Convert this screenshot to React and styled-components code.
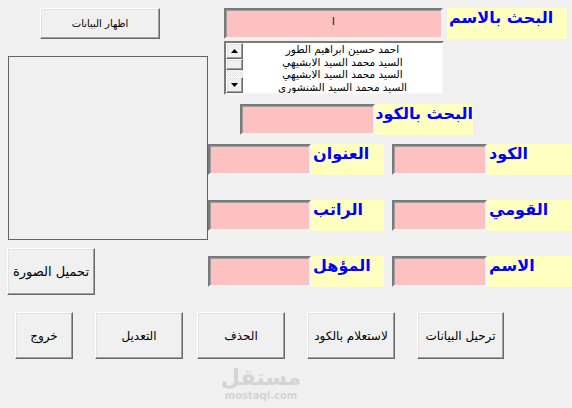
import React from "react";
import styled, { createGlobalStyle } from "styled-components";

// =============================
// Base
// =============================
const GlobalStyle = createGlobalStyle`
  html, body { margin: 0; padding: 0; background: #f0f0f0; }
  body { font-family: "DejaVu Sans", "Noto Sans", sans-serif; }
  * { box-sizing: border-box; }
`;

const Form = styled.div`
  position: relative;
  width: 572px;
  height: 408px;
  background: #f0f0f0;
  overflow: hidden;
`;

const Top = styled.div`
  display: flex;
  height: 304px;
`;

const LeftCol = styled.div`
  width: 208px;
  display: flex;
  flex-direction: column;
  align-items: flex-start;
`;

const RightCol = styled.div`
  flex: 1;
  display: flex;
  flex-direction: column;
  align-items: flex-start;
`;

// =============================
// Controls
// =============================
const Button = styled.button`
  width: ${({ $w }) => $w}px;
  height: ${({ $h }) => $h || 47}px;
  margin: ${({ $m }) => $m || 0};
  padding: 0;
  background: #f0f0f0;
  border: 1px solid;
  border-color: #ffffff #696969 #696969 #ffffff;
  box-shadow: inset -1px -1px 0 #a0a0a0, inset 1px 1px 0 #e3e3e3;
  font-family: "DejaVu Sans", sans-serif;
  font-size: ${({ $fs }) => $fs || 12}px;
  color: #000;
  direction: rtl;
  white-space: nowrap;
  display: flex;
  align-items: center;
  justify-content: center;
`;

const PictureFrame = styled.div`
  width: 200px;
  height: 184px;
  margin: 17px 0 0 8px;
  border: 1px solid #646464;
`;

const Row = styled.div`
  display: flex;
  align-items: flex-start;
  margin: ${({ $m }) => $m || 0};
`;

const TextBox = styled.div`
  width: ${({ $w }) => $w}px;
  height: 31px;
  background: #ffc0c0;
  border: 2px solid;
  border-color: #7a7a7a #f4f4f4 #f4f4f4 #7a7a7a;
  box-shadow: inset 1px 1px 0 #a0a0a0;
  font-family: "DejaVu Sans", sans-serif;
  font-size: 10px;
  text-align: center;
  padding-top: 6px;
  color: #000;
`;

const Label = styled.div`
  width: ${({ $w }) => $w}px;
  height: 31px;
  margin-left: ${({ $gap }) => $gap || 0}px;
  background: #ffffc0;
  color: #0000ff;
  font-family: "DejaVu Sans", sans-serif;
  font-weight: bold;
  font-size: 16px;
  line-height: 20px;
  padding: 0 0 0 2px;
  direction: rtl;
  text-align: left;
  white-space: nowrap;
`;

const ListBox = styled.div`
  width: 220px;
  height: 54px;
  margin: 2px 0 0 16px;
  background: #fff;
  border: 2px solid;
  border-color: #7a7a7a #f4f4f4 #f4f4f4 #7a7a7a;
  display: flex;
`;

const ScrollBar = styled.div`
  width: 17px;
  display: flex;
  flex-direction: column;
`;

const ScrollBtn = styled.div`
  height: ${({ $h }) => $h}px;
  background: #f0f0f0;
  border: 1px solid;
  border-color: #ffffff #696969 #696969 #ffffff;
  box-shadow: inset -1px -1px 0 #a0a0a0, inset 1px 1px 0 #e3e3e3;
  display: flex;
  align-items: center;
  justify-content: center;
`;

const Track = styled.div`
  flex: 1;
  background-color: #f0f0f0;
  background-image: repeating-conic-gradient(#ffffff 0 25%, #e0e0e0 0 50%);
  background-size: 2px 2px;
`;

const Items = styled.div`
  flex: 1;
  direction: rtl;
  text-align: center;
  font-family: "DejaVu Sans", sans-serif;
  font-size: 10.5px;
  line-height: 12.5px;
  color: #000;
  overflow: hidden;
`;

const FieldGrid = styled.div`
  display: grid;
  grid-template-columns: 176px 180px;
  column-gap: 8px;
  row-gap: 25px;
  margin-top: 9px;
`;

const Pair = styled.div`
  display: flex;
`;

const BottomRow = styled.div`
  display: flex;
  margin-top: 8px;
  padding-left: 15px;
`;

// watermark sits over the form background
const Watermark = styled.div`
  position: absolute;
  left: 220px;
  top: 366px;
  width: 82px;
  text-align: center;
  color: #d4d4d4;
  font-family: "DejaVu Sans", sans-serif;
  pointer-events: none;
`;

const WmBig = styled.div`
  font-size: 22px;
  font-weight: bold;
  line-height: 24px;
`;

const WmSmall = styled.div`
  font-size: 10px;
  font-weight: bold;
  line-height: 12px;
`;

const Arrow = ({ down }) => (
  <svg width="7" height="4" viewBox="0 0 7 4">
    <path d={down ? "M0 0 H7 L3.5 4 Z" : "M3.5 0 L7 4 H0 Z"} fill="#000" />
  </svg>
);

const names = [
  "احمد حسين ابراهيم الطور",
  "السيد محمد السيد الابشيهي",
  "السيد محمد السيد الابشيهي",
  "السيد محمد السيد الشنشوري",
];

const fields = [
  ["العنوان", "الكود"],
  ["الراتب", "القومي"],
  ["المؤهل", "الاسم"],
];

export default function App() {
  return (
    <Form>
      <GlobalStyle />
      <Top>
        <LeftCol>
          <Button $w={120} $h={31} $fs={10} $m="8px 0 0 40px">اظهار البيانات</Button>
          <PictureFrame />
          <Button $w={88} $h={47} $fs={13} $m="8px 0 0 7px">تحميل الصورة</Button>
        </LeftCol>

        <RightCol>
          <Row $m="8px 0 0 16px">
            <TextBox $w={219}>ا</TextBox>
            <Label $w={120} $gap={4}>البحث بالاسم</Label>
          </Row>

          <ListBox>
            <ScrollBar>
              <ScrollBtn $h={16}><Arrow /></ScrollBtn>
              <ScrollBtn $h={11} />
              <Track />
              <ScrollBtn $h={16}><Arrow down /></ScrollBtn>
            </ScrollBar>
            <Items>
              {names.map((n, i) => <div key={i}>{n}</div>)}
            </Items>
          </ListBox>

          <Row $m="9px 0 0 32px">
            <TextBox $w={135} />
            <Label $w={98}>البحث بالكود</Label>
          </Row>

          <FieldGrid>
            {fields.map(([a, b]) => (
              <React.Fragment key={a}>
                <Pair>
                  <TextBox $w={103} />
                  <Label $w={73}>{a}</Label>
                </Pair>
                <Pair>
                  <TextBox $w={95} />
                  <Label $w={85}>{b}</Label>
                </Pair>
              </React.Fragment>
            ))}
          </FieldGrid>
        </RightCol>
      </Top>

      <BottomRow>
        <Button $w={58} $fs={12}>خروج</Button>
        <Button $w={88} $fs={12} $m="0 0 0 22px">التعديل</Button>
        <Button $w={88} $fs={12} $m="0 0 0 14px">الحذف</Button>
        <Button $w={88} $fs={12} $m="0 0 0 22px">لاستعلام بالكود</Button>
        <Button $w={87} $fs={12} $m="0 0 0 22px">ترحيل البيانات</Button>
      </BottomRow>

      <Watermark>
        <WmBig>مستقل</WmBig>
        <WmSmall>mostaql.com</WmSmall>
      </Watermark>
    </Form>
  );
}
